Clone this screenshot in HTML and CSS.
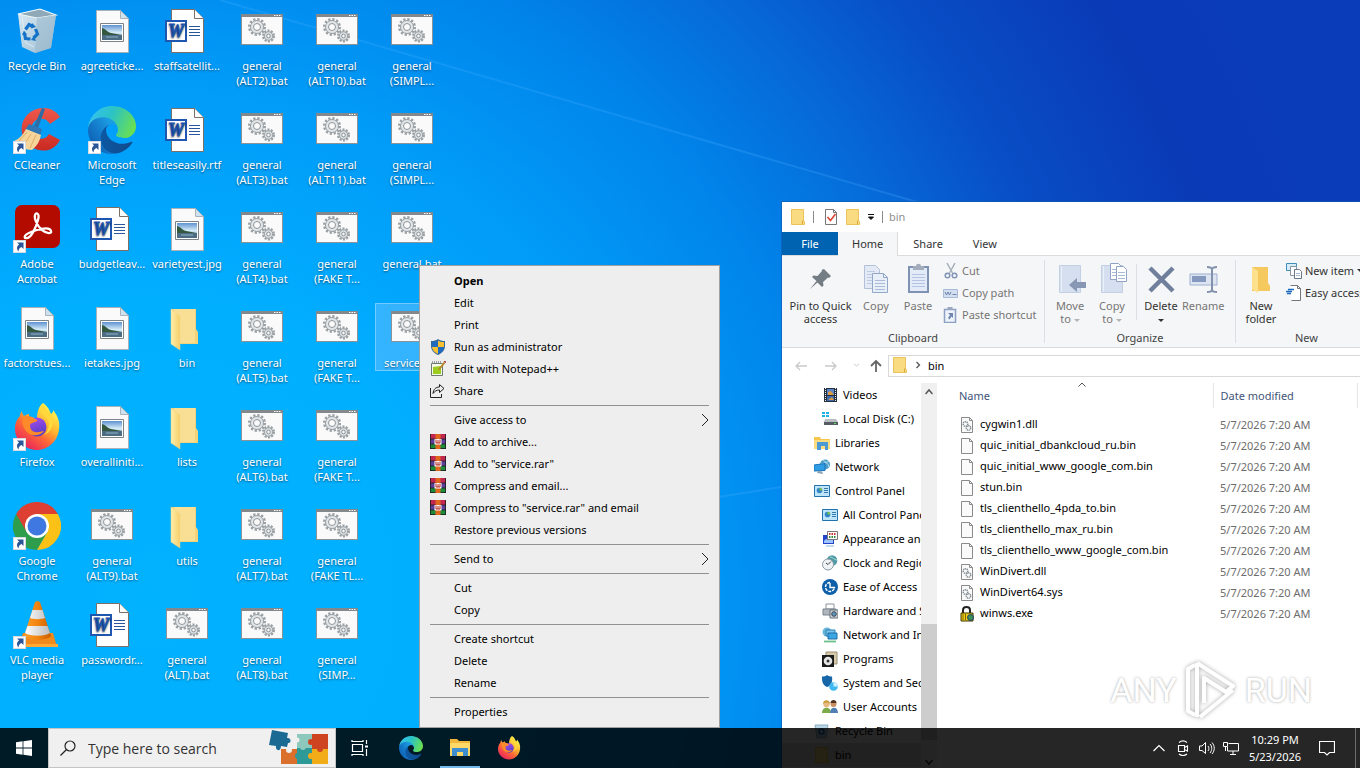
FILE: index.html
```html
<!DOCTYPE html>
<html lang="en">
<head>
    <meta charset="UTF-8">
    <meta name="viewport" content="width=device-width, initial-scale=1.0">
    <title>Desktop</title>
    <link rel="stylesheet" href="styles.css">
</head>
<body>

<!-- Icon sprite -->
<svg class="sprite" aria-hidden="true">
    <defs>
        <linearGradient id="gFolder" x1="0" y1="0" x2="1" y2="0"><stop offset="0" stop-color="#ffedaa"/><stop offset="1" stop-color="#f7cf6a"/></linearGradient>
        <linearGradient id="gEdgeA" x1="0" y1="0" x2="1" y2="0"><stop offset="0" stop-color="#0c59a4"/><stop offset="1" stop-color="#114a8b"/></linearGradient>
        <linearGradient id="gEdgeB" x1="0.8" y1="0.3" x2="0.1" y2="0.9"><stop offset="0" stop-color="#1b9de2"/><stop offset="0.5" stop-color="#1478c8"/><stop offset="1" stop-color="#0d5cb0"/></linearGradient>
        <linearGradient id="gEdgeC" x1="0" y1="0.3" x2="1" y2="0.6"><stop offset="0" stop-color="#35c1f1"/><stop offset="0.45" stop-color="#2bc3c4"/><stop offset="1" stop-color="#6be04e"/></linearGradient>
        <linearGradient id="gFox" x1="0.8" y1="0.1" x2="0.2" y2="0.95"><stop offset="0" stop-color="#fff44f"/><stop offset="0.35" stop-color="#ffb52e"/><stop offset="0.6" stop-color="#ff6a36"/><stop offset="1" stop-color="#e8205e"/></linearGradient>
        <linearGradient id="gPurple" x1="0" y1="0" x2="0.3" y2="1"><stop offset="0" stop-color="#b04bf0"/><stop offset="1" stop-color="#5540c8"/></linearGradient>
        <linearGradient id="gCone" x1="0" y1="0" x2="1" y2="0"><stop offset="0" stop-color="#ffa02c"/><stop offset="0.5" stop-color="#f28410"/><stop offset="1" stop-color="#c85e00"/></linearGradient>
        <linearGradient id="gWhite" x1="0" y1="0" x2="1" y2="0"><stop offset="0" stop-color="#fff"/><stop offset="1" stop-color="#bbb"/></linearGradient>
        <linearGradient id="gPic" x1="0" y1="0" x2="0" y2="1"><stop offset="0" stop-color="#5e92d0"/><stop offset="0.5" stop-color="#d5ebf7"/><stop offset="1" stop-color="#7fa3bd"/></linearGradient>
        <linearGradient id="gBin" x1="0" y1="0" x2="1" y2="1"><stop offset="0" stop-color="#d9e9f3"/><stop offset="0.6" stop-color="#b4cfe0"/><stop offset="1" stop-color="#8fb0c6"/></linearGradient>
        <linearGradient id="gCC" x1="0" y1="0" x2="0" y2="1"><stop offset="0" stop-color="#f0584b"/><stop offset="1" stop-color="#c92a22"/></linearGradient>
    </defs>

    <symbol id="link" viewBox="0 0 48 48">
        <rect x="0.5" y="35.5" width="12" height="12" fill="#fff" stroke="#d5dbe0"/>
        <path d="M4 37.500h6.500v6.500l-2-2c-2 1-3 2.200-3 4.500-2.400-3-1.600-5.600.6-7z" fill="#2a5699"/>
    </symbol>

    <symbol id="bat" viewBox="0 0 48 48">
        <rect x="3.500" y="7.500" width="41" height="30" fill="#fafafa" stroke="#8c9296"/>
        <path d="M3 7h42v3H3z" fill="#83888c"/>
        <path d="M36 8.500h7" stroke="#fff" stroke-dasharray="1.500 1"/>
        <circle cx="19" cy="20" r="7.500" fill="none" stroke="#9aa0a4" stroke-width="3" stroke-dasharray="2.200 1.730"/>
        <circle cx="19" cy="20" r="6.500" fill="#e2e6e9" stroke="#9aa0a4"/>
        <circle cx="19" cy="20" r="3.500" fill="#fafafa" stroke="#8f9599"/>
        <circle cx="30.500" cy="29" r="5" fill="none" stroke="#9aa0a4" stroke-width="3" stroke-dasharray="1.900 1.240"/>
        <circle cx="30.500" cy="29" r="4.300" fill="#d8dde0" stroke="#9aa0a4"/>
        <circle cx="30.500" cy="29" r="1.800" fill="#fafafa" stroke="#8f9599"/>
    </symbol>

    <symbol id="jpg" viewBox="0 0 48 48">
        <path d="M8.500 3.500h24l8 8v34h-32z" fill="#fafafa" stroke="#a9b2b8"/>
        <path d="M32.500 3.500v8h8z" fill="#cfe3ee" stroke="#a9b2b8"/>
        <path d="M12.500 16.500h23v18h-23z" fill="#fff" stroke="#7b8388"/>
        <path d="M14 18h20v15H14z" fill="url(#gPic)"/>
        <path d="M14 21c4 1 5 4 9 5s7 1 11 2v1H14z" fill="#33573f"/>
        <path d="M14 28h20v5H14z" fill="#4b6c82"/>
        <path d="M18 30h12" stroke="#8fb3cc"/>
    </symbol>

    <symbol id="word" viewBox="0 0 48 48">
        <path d="M8.500 2.500h23l9 9v34h-32z" fill="#fff" stroke="#7d6e66"/>
        <path d="M31.500 2.500v9h9" fill="#fff" stroke="#7d6e66"/>
        <path d="M26 19.500h11M26 22.500h11M26 25.500h11M26 28.500h11" stroke="#2b579a"/>
        <rect x="3" y="14" width="20" height="20" fill="#fff" stroke="#1f56b0" stroke-width="2"/>
        <text x="13" y="30" class="word-letter">W</text>
    </symbol>

    <symbol id="folder" viewBox="0 0 48 48">
        <path d="M9 5h24v20l2 3v12H14z" fill="#f4d27a"/>
        <path d="M11 5h21v34H15z" fill="#f9df93"/>
        <path d="M8 5l9 7v34l-9-6z" fill="url(#gFolder)" stroke="#f0d488" stroke-width="0.500"/>
    </symbol>

    <symbol id="recycle" viewBox="0 0 48 48">
        <path d="M5 7l22-5 16 6-5 33-16 5-13-6z" fill="url(#gBin)"/>
        <path d="M5 7l22-5 16 6-19 3z" fill="#8fa9b8" stroke="#f1f7fa" stroke-width="1.200"/>
        <path d="M24 11l19-3-5 33-16 5z" fill="#9fbdd0" opacity="0.700"/>
        <path d="M9 10l4 26 8 4" fill="none" stroke="#e8f3f9" opacity="0.700"/>
        <g fill="none" stroke="#1473c8" stroke-width="3.200"><path d="M12.500 22.500l3.500-5 4 2"/><path d="M22.500 22l2 5-4 4"/><path d="M17.500 32l-5-.5-1-5"/></g>
        <path d="M19 16l4 4-5 1.500zM23 34l-5-1 3-4zM9 28l2-4.500 3 4z" fill="#1473c8"/>
    </symbol>

    <symbol id="ccleaner" viewBox="0 0 48 48">
        <path d="M47 11C42 2 29-1 19 5 9 11 6 23 11 33s18 14 27 10c4-2 7-5 9-9l-11-6c-2 4-7 6-11 4-5-2-7-7-6-12s6-8 11-7c3 0 5 2 7 5z" fill="url(#gCC)"/>
        <path d="M32 3l-7 19-4-2L29 2z" fill="#2e6da4"/>
        <path d="M16 18l13 5-2 7-15-6z" fill="#2f78b7"/>
        <path d="M13 23l15 6c-1 6-4 11-9 15-6 0-13-3-18-9 5-2 9-6 12-12z" fill="#f6d59b"/>
        <path d="M14 26L5 36M18 28l-8 12M23 29l-6 13" stroke="#dcae66"/>
    </symbol>

    <symbol id="edge" viewBox="0 0 256 256">
        <path d="M231 190.500c-3.400 1.800-6.900 3.400-10.500 4.700-11.500 4.300-23.600 6.500-35.900 6.500-47.300 0-88.500-32.500-88.500-74.300 0-11.400 6.400-21.900 16.400-27.300-42.800 1.800-53.800 46.400-53.800 72.500 0 74 68.100 81.400 82.800 81.400 7.900 0 19.800-2.300 27-4.600l1.300-.4c27.600-9.500 51-28.100 66.600-52.800 1.200-1.900.6-4.300-1.200-5.500-1.300-.8-2.900-.9-4.200-.2z" fill="url(#gEdgeA)"/>
        <path d="M105.700 241.400c-8.900-5.500-16.600-12.800-22.700-21.300-26.300-36-18.400-86.500 17.600-112.800 3.800-2.700 7.700-5.200 11.900-7.200 3.100-1.500 8.400-4.100 15.500-4 10.100.1 19.600 4.900 25.700 13 4 5.400 6.300 11.900 6.400 18.700 0-.2 24.500-79.600-80-79.600-43.900 0-80 41.600-80 78.200-.2 19.300 4 38.500 12.100 56 27.600 58.800 94.800 87.600 156.400 67.100-21.100 6.600-44.100 3.700-62.900-8.100z" fill="url(#gEdgeB)"/>
        <path d="M152.300 148.900c-.8 1-3.300 2.500-3.300 5.700 0 2.600 1.700 5.100 4.700 7.200 14.400 10 41.500 8.700 41.600 8.700 10.700 0 21.100-2.900 30.300-8.300 18.800-11 30.400-31.100 30.400-52.900.3-22.400-8-37.300-11.300-43.900C223.500 23.900 177.700 0 128 0 58 0 1 56.200 0 126.200c.5-36.500 36.800-66 80-66 3.500 0 23.500.3 42 10.100 16.300 8.600 24.900 18.900 30.800 29.200 6.200 10.700 7.300 24.100 7.300 29.500s-2.700 13.300-7.800 19.900z" fill="url(#gEdgeC)"/>
    </symbol>

    <symbol id="acrobat" viewBox="0 0 48 48">
        <rect x="2" y="0" width="45" height="43" rx="7" fill="#b30b00"/>
        <path d="M12 33c-2-3 5-6 12-8s13-2 14 1-4 3-9-1-8-12-7-15 5-2 3 5-7 20-13 18z" fill="none" stroke="#fff" stroke-width="2.300"/>
    </symbol>

    <symbol id="firefox" viewBox="0 0 48 48">
        <path d="M30 0c6 4 7 9 8 11 2-1 2-3 2-4 5 6 7 12 6 19-1 12-11 21-22 21S2 38 2 26c0-6 2-10 5-13 0-2 1-4 2-5 0 2 1 4 2 5 2-1 3-2 5-2 0 0 0-1 0 3 2 0 6 1 8 2 0-8 2-13 6-16z" fill="url(#gFox)"/>
        <circle cx="24" cy="24" r="9.500" fill="url(#gPurple)"/>
        <path d="M10 14c4-2 9-1 12 2 2 1 3 1 2 2-2 2-6 1-7 4 0 3 1 6 5 7 3 1 6-1 9-1-3 4-8 5-12 4-8-3-11-11-9-18z" fill="#ff8a2a"/>
        <path d="M30 1c-3 6-1 9 3 13 5 5 3 14-2 18 8-3 11-12 7-20-2-4-6-6-8-11z" fill="#ffd93b"/>
    </symbol>

    <symbol id="chrome" viewBox="0 0 48 48">
        <path d="M3.200 12A24 24 0 0 0 24 48l10.400-18z" fill="#2f9e4c"/>
        <path d="M44.800 12A24 24 0 0 1 24 48l10.400-18L24 12z" fill="#fbc116"/>
        <path d="M44.800 12A24 24 0 0 0 3.200 12l10.400 18L24 12z" fill="#dd4032"/>
        <circle cx="24" cy="24" r="12" fill="#fff"/>
        <circle cx="24" cy="24" r="9.500" fill="#3f78e0"/>
    </symbol>

    <symbol id="vlc" viewBox="0 0 48 48">
        <path d="M10 32h30l4 14H5z" fill="#f08a1c"/>
        <path d="M4 43h41v3H4z" fill="#ffa834"/>
        <path d="M22 1c1-1 4-1 5 0l11 34c-4 5-23 5-27 0z" fill="url(#gCone)"/>
        <path d="M19.500 9h10l2.500 8c-3 1.500-12 1.500-15 0zM14.500 25h20l2.500 7c-5 3.500-20 3.500-25 0z" fill="url(#gWhite)"/>
    </symbol>

    <!-- menu -->
    <symbol id="shield" viewBox="0 0 16 16">
        <path d="M8 0c2 1.500 4 2 7 2v5c0 4-2.500 7-7 9-4.500-2-7-5-7-9V2c3 0 5-.5 7-2z" fill="#33689c"/>
        <path d="M8 1.500V8H2V3c2.500 0 4.500-.5 6-1.500zM14 8c-.2 3-2.200 5.200-6 7V8z" fill="#1d6cc0"/>
        <path d="M8 1.500C9.500 2.500 11.500 3 14 3v5H8zM2 8h6v7c-3.800-1.800-5.800-4-6-7z" fill="#fbc02f"/>
    </symbol>
    <symbol id="npp" viewBox="0 0 16 16">
        <path d="M1.500 2.500h11v12h-11z" fill="#f6fbe9" stroke="#6d7a70"/>
        <path d="M3 6l8-1v8H3z" fill="#9ccc1f"/>
        <path d="M2 1h10" stroke="#555" stroke-dasharray="1 1"/>
        <path d="M14.500 1.500L9 8.500" stroke="#b8862b" stroke-width="2"/>
        <path d="M14 0l2 1.500" stroke="#a33" stroke-width="1.500"/>
    </symbol>
    <symbol id="share" viewBox="0 0 16 16">
        <path d="M.5 5v9.500h11V11" fill="none" stroke="#222"/>
        <path d="M9.500 1.500l4.500 4-4.500 4V7c-3 0-4.500 1-6.500 3.500.5-4 2.500-6.500 6.500-6.500z" fill="none" stroke="#222"/>
    </symbol>
    <symbol id="rar" viewBox="0 0 16 16">
        <path d="M0 0h16v6H0z" fill="#c2284f"/><path d="M0 5h16v5H0z" fill="#5b3f9b"/><path d="M0 10h16v5H0z" fill="#1e8b3a"/>
        <path d="M0 5h16M0 10h16M.5 0v15M15.500 0v15M0 14.500h16" stroke="#1c1c1c" stroke-width="0.800"/>
        <path d="M5.500 0h5v15h-5z" fill="#e0671e"/>
        <path d="M4.500 5h7v5.500h-7z" fill="#fff"/><path d="M6 5.500v3.500h4V5.500M8 6v3" fill="none" stroke="#b3261e"/>
    </symbol>
    <symbol id="more" viewBox="0 0 8 14"><path d="M1 1l6 6-6 6" fill="none" stroke="#222"/></symbol>

    <!-- explorer -->
    <symbol id="sfolder" viewBox="0 0 16 16">
        <path d="M1.500.5h12v11l1 1v3h-13z" fill="#f9dc82" stroke="#eac35a"/>
        <path d="M12.500 15v-3l1-1" fill="none" stroke="#d9a93c"/>
    </symbol>
    <symbol id="check" viewBox="0 0 16 16">
        <path d="M2.500.5h8l3 3v12h-11z" fill="#fff" stroke="#777"/><path d="M10.500.5v3h3" fill="none" stroke="#777"/>
        <path d="M4.500 8l3 3.500L12.500 5" fill="none" stroke="#d9432f" stroke-width="1.600"/>
    </symbol>
    <symbol id="drop" viewBox="0 0 8 8"><path d="M1 1.500h6M1.500 4h5L4 6.500z" fill="#111" stroke="#111"/></symbol>
    <symbol id="pin" viewBox="0 0 32 32">
        <path d="M19 6l7 7-2 2-1-.5-5 4.500.5 3.500-1.500 1.500-4.500-4.500L5 26l6.500-8-4.500-4 1.500-1.500 4 .5 4.500-5-.5-1z" fill="#747c84"/>
    </symbol>
    <symbol id="copy" viewBox="0 0 32 32">
        <path d="M4.500 2.500h11l4 4v19h-15z" fill="#e3eaf6" stroke="#b3c1d8"/>
        <path d="M7 8.500h8M7 11.500h8M7 14.500h8M7 17.500h8M7 20.500h8" stroke="#bccbe2"/>
        <path d="M12.500 10.500h11l4 4v15h-15z" fill="#e9eff9" stroke="#93a7c9"/><path d="M23.500 10.500v4h4" fill="none" stroke="#93a7c9"/>
        <path d="M15 17.500h10M15 20.500h10M15 23.500h10M15 26.500h10" stroke="#a9bbd8"/>
    </symbol>
    <symbol id="paste" viewBox="0 0 32 32">
        <path d="M7 4h19v25H7z" fill="#e3eaf8" stroke="#8092b4" stroke-width="2"/>
        <path d="M10 11.500h13M10 14.500h13M10 17.500h13M10 20.500h13M10 23.500h13" stroke="#b4c4e2"/>
        <path d="M11 3h3c0-3 5-3 5 0h3v4H11z" fill="#a3adbb"/>
    </symbol>
    <symbol id="cut" viewBox="0 0 16 16">
        <path d="M4 0l5.500 10M12 0L6.500 10" stroke="#a7b0bb" stroke-width="1.500"/>
        <circle cx="4.500" cy="12.500" r="2.300" fill="none" stroke="#8094b5" stroke-width="1.500"/><circle cx="11.500" cy="12.500" r="2.300" fill="none" stroke="#8094b5" stroke-width="1.500"/>
    </symbol>
    <symbol id="path" viewBox="0 0 16 16">
        <path d="M.5 4.500h14v8H.5z" fill="#d3def0" stroke="#a9bad6"/><path d="M2 7l1.500 3L5 7l1.500 3L8 7M9.500 9.500h4" fill="none" stroke="#6e84ab"/>
    </symbol>
    <symbol id="pshort" viewBox="0 0 16 16">
        <path d="M1.500 2.500h11v13h-11z" fill="#eef3fb" stroke="#8ba0c2" stroke-width="1.500"/><path d="M4.500 0h5v3h-5z" fill="#9aa9c0"/>
        <path d="M5 6h5v5L8.500 9.500l-2 3L5 11l2-3z" fill="#6e86b0"/>
    </symbol>
    <symbol id="move" viewBox="0 0 32 32">
        <path d="M5.500 2.500h21v27h-21z" fill="#d5dfef" stroke="#c3cfe2"/><path d="M7.500 3v26" stroke="#eaf0f8"/>
        <path d="M15 22l8-7v4h9v6h-9v4z" fill="#8797b4"/>
    </symbol>
    <symbol id="copyto" viewBox="0 0 32 32">
        <path d="M5.500 2.500h21v27h-21z" fill="#d5dfef" stroke="#c3cfe2"/><path d="M7.500 3v26" stroke="#eaf0f8"/>
        <path d="M14.500.5h8l3 3v13h-11z" fill="#fff" stroke="#8fa3c4"/>
        <path d="M20.500 3.500h7l3 3v12h-10z" fill="#fff" stroke="#8fa3c4"/>
        <path d="M16 6.500h4M16 9.500h4M16 12.500h4M22 9.500h7M22 12.500h7M22 15.500h7" stroke="#a9bad6"/>
    </symbol>
    <symbol id="delete" viewBox="0 0 32 32"><path d="M5 5l23 23M28 5L5 28" stroke="#6f7f9c" stroke-width="4.500"/></symbol>
    <symbol id="rename" viewBox="0 0 32 32">
        <path d="M3 11h27v11H3z" fill="#dde5f3" stroke="#9fb0ce"/><path d="M5 13h14v6H5z" fill="#8599bf"/>
        <path d="M20 4c3 0 5 .5 5 2.500v20c0 2-2 2.500-5 2.500M30 4c-3 0-5 .5-5 2.500M30 29c-3 0-5-.5-5-2.500" fill="none" stroke="#8291ac" stroke-width="2"/>
    </symbol>
    <symbol id="newfolder" viewBox="0 0 32 32">
        <path d="M7 4h16v16l2 3v5H7z" fill="#f5c95e"/><path d="M7 4l6 4v22l-6-4z" fill="#ffe08c"/>
    </symbol>
    <symbol id="newitem" viewBox="0 0 16 16">
        <path d="M.5.500h10v7H.5z" fill="#d7ecf7" stroke="#3e8fb8"/><path d="M4.500 3.500h6v9h-6z" fill="#fff" stroke="#8a97a5"/><path d="M8.500 6.500h5l2 2v7h-7z" fill="#fff" stroke="#68788a"/><path d="M10 10.500h4M10 12.500h4" stroke="#a9bad6"/>
    </symbol>
    <symbol id="easy" viewBox="0 0 16 16">
        <path d="M4.500.5h7l3 3v12h-9" fill="#fff" stroke="#777"/><path d="M11.500.5v3h3" fill="none" stroke="#777"/>
        <path d="M2 4.500h6M0 6.500h6M1 8.500h4" stroke="#1b6bc0" stroke-width="1.300"/>
    </symbol>
    <symbol id="left" viewBox="0 0 14 14"><path d="M13 7H2M6 3L2 7l4 4" fill="none" stroke="#c9c9c9" stroke-width="1.300"/></symbol>
    <symbol id="right" viewBox="0 0 14 14"><path d="M1 7h11M8 3l4 4-4 4" fill="none" stroke="#c9c9c9" stroke-width="1.300"/></symbol>
    <symbol id="up" viewBox="0 0 14 14"><path d="M7 13V2M2 7l5-5 5 5" fill="none" stroke="#666" stroke-width="1.800"/></symbol>
    <symbol id="caret" viewBox="0 0 8 8"><path d="M2 2l2.500 2L7 2" fill="none" stroke="#ccc"/></symbol>
    <symbol id="crumb" viewBox="0 0 8 8"><path d="M2.500 1L5.500 4l-3 3" fill="none" stroke="#555" stroke-width="1.300"/></symbol>
    <symbol id="chevup" viewBox="0 0 8 8"><path d="M.5 6L4 2l3.500 4" fill="none" stroke="#555" stroke-width="1.500"/></symbol>
    <symbol id="sort" viewBox="0 0 8 8"><path d="M.5 5.500L4 2l3.500 3.500" fill="none" stroke="#555"/></symbol>
    <symbol id="chevdown" viewBox="0 0 8 8"><path d="M.5 2L4 6l3.500-4" fill="none" stroke="#333" stroke-width="1.500"/></symbol>

    <symbol id="video" viewBox="0 0 16 16"><path d="M2 1h13v14H2z" fill="#26303c"/><path d="M3.500 1v14M13.500 1v14" stroke="#e8eef4" stroke-dasharray="1 1"/><path d="M5 2h7v6H5z" fill="#5b86c8"/><path d="M5 9h7v5H5z" fill="#3f6bae"/><path d="M6 5l3-1 3 4H6zM6 13l4-3 2 3z" fill="#d79a45"/></symbol>
    <symbol id="disk" viewBox="0 0 16 16"><path d="M0 1h3v2H0zM4 1h3v2H4zM0 4h3v2H0zM4 4h3v2H4z" fill="#1fb0e8"/><path d="M3 8h11l2 3H2z" fill="#b8bdc2"/><path d="M2 11h14v3H2z" fill="#565c63"/><path d="M12 12.500h2" stroke="#5fe06a"/></symbol>
    <symbol id="libs" viewBox="0 0 16 16"><path d="M0 2h6l1 2h9v10H0z" fill="#f5c64c"/><path d="M0 5h16v9H0z" fill="#fbdc80"/><path d="M3 7h11v8h-3v-4H7v4H3z" fill="#4b9ad6"/></symbol>
    <symbol id="network" viewBox="0 0 16 16"><circle cx="11" cy="5.500" r="5" fill="#4c9cc8"/><path d="M9 1c2 2 5 3 6 7M7 5c3-1 5-1 8-3" stroke="#b5e0f0" fill="none"/><path d="M0 6l11-1.500v7L0 12z" fill="#2f9ce6" stroke="#1872b8"/><path d="M4 12l4 .5 1 2.500-6-1z" fill="#8ba3b5"/></symbol>
    <symbol id="cpanel" viewBox="0 0 16 16"><path d="M.5 2.500h15v11H.5z" fill="#bfe5fa" stroke="#2173b0"/><circle cx="5.500" cy="7.500" r="2.800" fill="#2f86c9"/><path d="M5.500 7.500V4.700a2.800 2.800 0 0 1 2.800 2.800z" fill="#7cc142"/><path d="M10 5.500h4M10 7.500h4M10 9.500h4" stroke="#3579ad"/></symbol>
    <symbol id="appearance" viewBox="0 0 16 16"><path d="M1 4h11v9H1z" fill="#2443c9"/><path d="M2 10c3-4 5 1 9-3v5H2z" fill="#9ec4ff"/><path d="M5.500.5h10v8h-10z" fill="#fff" stroke="#777"/><path d="M7 3h7" stroke="#c33" stroke-width="2" stroke-dasharray="1.500 1"/><path d="M7 6h7" stroke="#338a3e" stroke-width="2" stroke-dasharray="1.500 1"/><path d="M4 15h8" stroke="#8cb5d8"/></symbol>
    <symbol id="clock" viewBox="0 0 16 16"><circle cx="10" cy="5.500" r="5.300" fill="#4f9aa8"/><path d="M8 2c3 0 4 3 7 3" stroke="#a7dccb" fill="none"/><circle cx="6" cy="9.500" r="5.500" fill="#eef2f5" stroke="#8b99a6"/><path d="M6 9.500l3-3M6 9.500L4 8" stroke="#444"/></symbol>
    <symbol id="ease" viewBox="0 0 16 16"><circle cx="8" cy="8" r="8" fill="#0c5fa8"/><path d="M8 3.500a4.500 4.500 0 1 0 4.500 4.500" fill="none" stroke="#fff" stroke-width="1.500" stroke-dasharray="3 1"/><path d="M8 4v4.500h5" fill="none" stroke="#fff" stroke-width="1.400"/></symbol>
    <symbol id="printer" viewBox="0 0 16 16"><path d="M4 1h8v5H4z" fill="#fff" stroke="#8b939b"/><path d="M1 6h13v6H1z" fill="#aeb6bf" stroke="#7b858e"/><path d="M8 7h8v8H8z" fill="#ccd3d9" stroke="#69737c"/><circle cx="12" cy="11" r="2.300" fill="#5c98c8" stroke="#444"/></symbol>
    <symbol id="netint" viewBox="0 0 16 16"><circle cx="5" cy="5" r="4.500" fill="#6ab7dc"/><path d="M4 3h9v6H4z" fill="#7dc4ec" stroke="#2e80b5"/><path d="M6 6h9v6H6z" fill="#39a5e3" stroke="#1c6fa8"/><path d="M2 14.500h12" stroke="#6cc08b" stroke-width="1.800"/></symbol>
    <symbol id="programs" viewBox="0 0 16 16"><path d="M4 1h11v12H4z" fill="#d7c8a8" stroke="#9b8f75"/><path d="M0 4h12v12H0z" fill="#1a1a1a"/><circle cx="6" cy="10" r="4.300" fill="#e6e6e6"/><circle cx="6" cy="10" r="1.500" fill="#333"/></symbol>
    <symbol id="security" viewBox="0 0 16 16"><path d="M5 0c1.500 1 3.500 1.500 5 1.500C11 8 8 11 5 12 2 11-.5 8 0 1.500 2 1.500 4 1 5 0z" fill="#1767a8"/><circle cx="11.500" cy="11.500" r="4.300" fill="#3fb8ef"/><path d="M11.500 11.500V7.200a4.300 4.300 0 0 1 4.300 4.300z" fill="#cfeefd"/></symbol>
    <symbol id="users" viewBox="0 0 16 16"><circle cx="4.500" cy="5" r="3.200" fill="#e7b884"/><path d="M1 5c0-5 7-5 7 0-2-2-5-2-7 0z" fill="#c79b35"/><path d="M0 14c0-7 9-7 9 0z" fill="#7caa4a"/><circle cx="11.500" cy="5" r="3" fill="#c98e62"/><path d="M8.500 4c0-4 6-4 6 0z" fill="#503322"/><path d="M8 14c0-7 8-7 8 0z" fill="#517fb3"/></symbol>
    <symbol id="sbin" viewBox="0 0 16 16"><path d="M1 2h13l-2 13H3z" fill="#b9d4e4" stroke="#8db0c6"/><circle cx="7.500" cy="8.500" r="2.500" fill="none" stroke="#1473c8" stroke-width="1.500"/></symbol>

    <symbol id="blank" viewBox="0 0 16 16"><path d="M2.500.5h8l3 3v12h-11z" fill="#fafafa" stroke="#8b8b8b"/><path d="M10.500.5v3h3" fill="none" stroke="#8b8b8b"/></symbol>
    <symbol id="dll" viewBox="0 0 16 16"><path d="M2.500.5h8l3 3v12h-11z" fill="#fafafa" stroke="#8b8b8b"/><path d="M10.500.5v3h3" fill="none" stroke="#8b8b8b"/><circle cx="6.500" cy="7" r="2.300" fill="none" stroke="#7f8a92" stroke-width="1.500" stroke-dasharray="1.200 .6"/><circle cx="9.500" cy="11" r="2.200" fill="none" stroke="#7f8a92" stroke-width="1.500" stroke-dasharray="1.200 .6"/></symbol>
    <symbol id="lock" viewBox="0 0 16 16"><path d="M4 8V4c0-4 7-4 7 0v4" fill="none" stroke="#222" stroke-width="2"/><path d="M2 7h12v8H2z" fill="#f2cf1d" stroke="#3b3500"/><path d="M4 8v6M6.500 8v6" stroke="#7a6500"/><circle cx="11.500" cy="11.500" r="3" fill="#3c8f5a" stroke="#1c3b66"/></symbol>

    <!-- taskbar -->
    <symbol id="win" viewBox="0 0 16 16"><path d="M0 2.200l6.600-.9v6.300H0zM7.400 1.200L16 0v7.600H7.400zM0 8.400h6.600v6.300L0 13.800zM7.400 8.400H16V16l-8.600-1.200z" fill="#fff"/></symbol>
    <symbol id="search" viewBox="0 0 16 16"><circle cx="10" cy="6" r="5" fill="none" stroke="#222" stroke-width="1.200"/><path d="M6.500 9.500L.5 15.500" stroke="#222" stroke-width="1.300"/></symbol>
    <symbol id="puzzle" viewBox="0 0 64 36">
        <path d="M30 4h15v14H30z" fill="#8cc8bb"/><path d="M45 4h16v15H45z" fill="#cf4420"/><path d="M14 19h16v15H14z" fill="#db6f2c"/><path d="M30 18h15v16H30z" fill="#2e9a97"/><path d="M45 19h16v15H45z" fill="#f2ac18"/>
        <circle cx="44" cy="12" r="3" fill="#cf4420"/><circle cx="53" cy="19" r="3" fill="#cf4420"/><circle cx="36" cy="17" r="3" fill="#8cc8bb"/><circle cx="31" cy="26" r="3" fill="#2e9a97"/><circle cx="44" cy="26" r="3" fill="#f2ac18"/><circle cx="22" cy="20" r="3" fill="#f0f0f0"/><circle cx="30" cy="10" r="2.500" fill="#f0f0f0"/>
        <path d="M5 0l16 3-1 5c4-1 5 5 1 5l-1 4-6-1c0 6-6 5-5 0l-7-1z" fill="#1b6a94"/>
    </symbol>
    <symbol id="taskview" viewBox="0 0 18 18"><path d="M1 3V1M12 3V1M1 15v2M12 15v2M1 2.500h11M1 15.500h11M1.500 5.500h10v7h-10zM15.500 1v4M15.500 10v7" fill="none" stroke="#fff" stroke-width="1.200"/><path d="M14 6.500h3v2h-3z" fill="#fff"/></symbol>
    <symbol id="explorer" viewBox="0 0 24 24"><path d="M2 3h7l2 2h11v15H2z" fill="#f0b73a"/><path d="M2 7h20v13H2z" fill="#ffd968"/><path d="M4 12h16v8h-5v-4H9v4H4z" fill="#3f8fd0"/></symbol>
    <symbol id="tchev" viewBox="0 0 16 16"><path d="M2.500 11L8 5.500l5.500 5.500" fill="none" stroke="#fff" stroke-width="1.200"/></symbol>
    <symbol id="meet" viewBox="0 0 16 16"><path d="M3.500 5.500h6v6h-6zM9.500 7.500l3-1.500v5l-3-1.500M4 2.500c2.500-2 5.500-2 8 0M4 14c2.500 2 5.500 2 8 0" fill="none" stroke="#fff" stroke-width="1.100"/></symbol>
    <symbol id="volume" viewBox="0 0 16 16"><path d="M.5 6v4.500H3L6.500 13.500v-11L3 6zM9 6c1.200 1.500 1.200 3.500 0 5M11 4c2.300 2.500 2.300 6 0 9M13 2.500c3 3.500 3 8 0 11.500" fill="none" stroke="#fff"/></symbol>
    <symbol id="lan" viewBox="0 0 16 16"><path d="M5.500 3.500h10v7.500h-11V7M10 11v3M7 14.500h6M.5 2.500h4v4h-4zM2.500 6.500V11" fill="none" stroke="#fff"/></symbol>
    <symbol id="note" viewBox="0 0 16 16"><path d="M.5 1.500h15v11h-5L8 15l-2.500-2.500h-5z" fill="none" stroke="#fff" stroke-width="1.200"/></symbol>
</svg>

<div class="desktop">
    <svg class="rays" viewBox="0 0 1360 768" preserveAspectRatio="none" aria-hidden="true">
        <path d="M220 0L1000 226" stroke="#55b4ff" stroke-width="2" opacity="0.220"/>
        <path d="M0 8L240 0L1000 226L1360 380V768H0z" fill="#0aa0ff" opacity="0.050"/>
        <path d="M700 500L800 484" stroke="#4fb0ff" stroke-width="2" opacity="0.250"/>
    </svg>

    <!-- Desktop icons, filled column by column -->
    <ul class="icons">
        <li class="icon"><svg><use href="#recycle"/></svg><span>Recycle Bin</span></li>
        <li class="icon"><svg><use href="#ccleaner"/><use href="#link"/></svg><span>CCleaner</span></li>
        <li class="icon"><svg><use href="#acrobat"/><use href="#link"/></svg><span>Adobe Acrobat</span></li>
        <li class="icon"><svg><use href="#jpg"/></svg><span>factorstues...</span></li>
        <li class="icon"><svg><use href="#firefox"/><use href="#link"/></svg><span>Firefox</span></li>
        <li class="icon"><svg><use href="#chrome"/><use href="#link"/></svg><span>Google Chrome</span></li>
        <li class="icon"><svg><use href="#vlc"/><use href="#link"/></svg><span>VLC media player</span></li>

        <li class="icon"><svg><use href="#jpg"/></svg><span>agreeticke...</span></li>
        <li class="icon"><svg><use href="#edge"/><use href="#link"/></svg><span>Microsoft Edge</span></li>
        <li class="icon"><svg><use href="#word"/></svg><span>budgetleav...</span></li>
        <li class="icon"><svg><use href="#jpg"/></svg><span>ietakes.jpg</span></li>
        <li class="icon"><svg><use href="#jpg"/></svg><span>overalliniti...</span></li>
        <li class="icon"><svg><use href="#bat"/></svg><span>general (ALT9).bat</span></li>
        <li class="icon"><svg><use href="#word"/></svg><span>passwordr...</span></li>

        <li class="icon"><svg><use href="#word"/></svg><span>staffsatellit...</span></li>
        <li class="icon"><svg><use href="#word"/></svg><span>titleseasily.rtf</span></li>
        <li class="icon"><svg><use href="#jpg"/></svg><span>varietyest.jpg</span></li>
        <li class="icon"><svg><use href="#folder"/></svg><span>bin</span></li>
        <li class="icon"><svg><use href="#folder"/></svg><span>lists</span></li>
        <li class="icon"><svg><use href="#folder"/></svg><span>utils</span></li>
        <li class="icon"><svg><use href="#bat"/></svg><span>general (ALT).bat</span></li>

        <li class="icon"><svg><use href="#bat"/></svg><span>general (ALT2).bat</span></li>
        <li class="icon"><svg><use href="#bat"/></svg><span>general (ALT3).bat</span></li>
        <li class="icon"><svg><use href="#bat"/></svg><span>general (ALT4).bat</span></li>
        <li class="icon"><svg><use href="#bat"/></svg><span>general (ALT5).bat</span></li>
        <li class="icon"><svg><use href="#bat"/></svg><span>general (ALT6).bat</span></li>
        <li class="icon"><svg><use href="#bat"/></svg><span>general (ALT7).bat</span></li>
        <li class="icon"><svg><use href="#bat"/></svg><span>general (ALT8).bat</span></li>

        <li class="icon"><svg><use href="#bat"/></svg><span>general (ALT10).bat</span></li>
        <li class="icon"><svg><use href="#bat"/></svg><span>general (ALT11).bat</span></li>
        <li class="icon"><svg><use href="#bat"/></svg><span>general<br>(FAKE T...</span></li>
        <li class="icon"><svg><use href="#bat"/></svg><span>general<br>(FAKE T...</span></li>
        <li class="icon"><svg><use href="#bat"/></svg><span>general<br>(FAKE T...</span></li>
        <li class="icon"><svg><use href="#bat"/></svg><span>general<br>(FAKE TL...</span></li>
        <li class="icon"><svg><use href="#bat"/></svg><span>general<br>(SIMP...</span></li>

        <li class="icon"><svg><use href="#bat"/></svg><span>general<br>(SIMPL...</span></li>
        <li class="icon"><svg><use href="#bat"/></svg><span>general<br>(SIMPL...</span></li>
        <li class="icon"><svg><use href="#bat"/></svg><span>general.bat</span></li>
        <li class="icon selected"><svg><use href="#bat"/></svg><span>service.bat</span></li>
    </ul>

    <!-- Explorer window -->
    <section class="window">
        <header class="titlebar">
            <svg class="i16"><use href="#sfolder"/></svg>
            <i class="bar"></i>
            <svg class="i16"><use href="#check"/></svg>
            <svg class="i16"><use href="#sfolder"/></svg>
            <svg class="i8"><use href="#drop"/></svg>
            <i class="bar"></i>
            <span>bin</span>
        </header>
        <nav class="tabs">
            <button class="file">File</button>
            <button class="active">Home</button>
            <button>Share</button>
            <button>View</button>
        </nav>
        <div class="ribbon">
            <div class="group clipboard">
                <div class="tools">
                    <button class="big wide"><svg><use href="#pin"/></svg>Pin to Quick<br>access</button>
                    <button class="big" disabled><svg><use href="#copy"/></svg>Copy</button>
                    <button class="big" disabled><svg><use href="#paste"/></svg>Paste</button>
                    <div class="stack">
                        <button disabled><svg class="i16"><use href="#cut"/></svg>Cut</button>
                        <button disabled><svg class="i16"><use href="#path"/></svg>Copy path</button>
                        <button disabled><svg class="i16"><use href="#pshort"/></svg>Paste shortcut</button>
                    </div>
                </div>
                <div class="caption">Clipboard</div>
            </div>
            <div class="group organize">
                <div class="tools">
                    <button class="big" disabled><svg><use href="#move"/></svg>Move<br>to <i class="tri"></i></button>
                    <button class="big" disabled><svg><use href="#copyto"/></svg>Copy<br>to <i class="tri"></i></button>
                    <i class="divider"></i>
                    <button class="big"><svg><use href="#delete"/></svg>Delete<br><i class="tri"></i></button>
                    <button class="big" disabled><svg><use href="#rename"/></svg>Rename</button>
                </div>
                <div class="caption">Organize</div>
            </div>
            <div class="group new">
                <div class="tools">
                    <button class="big"><svg><use href="#newfolder"/></svg>New<br>folder</button>
                    <div class="stack">
                        <button><svg class="i16"><use href="#newitem"/></svg>New item <i class="tri"></i></button>
                        <button><svg class="i16"><use href="#easy"/></svg>Easy access <i class="tri"></i></button>
                    </div>
                </div>
                <div class="caption">New</div>
            </div>
        </div>
        <div class="navbar">
            <button disabled aria-label="Back"><svg class="i14"><use href="#left"/></svg></button>
            <button disabled aria-label="Forward"><svg class="i14"><use href="#right"/></svg></button>
            <button class="slim" disabled aria-label="Recent"><svg class="i8"><use href="#caret"/></svg></button>
            <button class="slim" aria-label="Up"><svg class="i14"><use href="#up"/></svg></button>
            <div class="address">
                <svg class="i16"><use href="#sfolder"/></svg>
                <svg class="i8"><use href="#crumb"/></svg>
                <span>bin</span>
            </div>
        </div>
        <div class="panes">
            <ul class="tree">
                <li class="sub"><svg class="i16"><use href="#video"/></svg>Videos</li>
                <li class="sub"><svg class="i16"><use href="#disk"/></svg>Local Disk (C:)</li>
                <li><svg class="i16"><use href="#libs"/></svg>Libraries</li>
                <li><svg class="i16"><use href="#network"/></svg>Network</li>
                <li><svg class="i16"><use href="#cpanel"/></svg>Control Panel</li>
                <li class="sub"><svg class="i16"><use href="#cpanel"/></svg>All Control Panel Items</li>
                <li class="sub"><svg class="i16"><use href="#appearance"/></svg>Appearance and Personalization</li>
                <li class="sub"><svg class="i16"><use href="#clock"/></svg>Clock and Region</li>
                <li class="sub"><svg class="i16"><use href="#ease"/></svg>Ease of Access</li>
                <li class="sub"><svg class="i16"><use href="#printer"/></svg>Hardware and Sound</li>
                <li class="sub"><svg class="i16"><use href="#netint"/></svg>Network and Internet</li>
                <li class="sub"><svg class="i16"><use href="#programs"/></svg>Programs</li>
                <li class="sub"><svg class="i16"><use href="#security"/></svg>System and Security</li>
                <li class="sub"><svg class="i16"><use href="#users"/></svg>User Accounts</li>
                <li><svg class="i16"><use href="#sbin"/></svg>Recycle Bin</li>
                <li class="current"><svg class="i16"><use href="#sfolder"/></svg>bin</li>
            </ul>
            <div class="scrollbar">
                <svg class="i8"><use href="#chevup"/></svg>
                <div class="thumb"></div>
                <svg class="i8"><use href="#chevdown"/></svg>
            </div>
            <table class="files">
                <thead>
                    <tr><th class="name">Name<svg class="sort i8"><use href="#sort"/></svg></th><th class="date">Date modified</th><th></th></tr>
                </thead>
                <tbody>
                    <tr><td><svg class="i16"><use href="#dll"/></svg>cygwin1.dll</td><td>5/7/2026 7:20 AM</td></tr>
                    <tr><td><svg class="i16"><use href="#blank"/></svg>quic_initial_dbankcloud_ru.bin</td><td>5/7/2026 7:20 AM</td></tr>
                    <tr><td><svg class="i16"><use href="#blank"/></svg>quic_initial_www_google_com.bin</td><td>5/7/2026 7:20 AM</td></tr>
                    <tr><td><svg class="i16"><use href="#blank"/></svg>stun.bin</td><td>5/7/2026 7:20 AM</td></tr>
                    <tr><td><svg class="i16"><use href="#blank"/></svg>tls_clienthello_4pda_to.bin</td><td>5/7/2026 7:20 AM</td></tr>
                    <tr><td><svg class="i16"><use href="#blank"/></svg>tls_clienthello_max_ru.bin</td><td>5/7/2026 7:20 AM</td></tr>
                    <tr><td><svg class="i16"><use href="#blank"/></svg>tls_clienthello_www_google_com.bin</td><td>5/7/2026 7:20 AM</td></tr>
                    <tr><td><svg class="i16"><use href="#dll"/></svg>WinDivert.dll</td><td>5/7/2026 7:20 AM</td></tr>
                    <tr><td><svg class="i16"><use href="#dll"/></svg>WinDivert64.sys</td><td>5/7/2026 7:20 AM</td></tr>
                    <tr><td><svg class="i16"><use href="#lock"/></svg>winws.exe</td><td>5/7/2026 7:20 AM</td></tr>
                </tbody>
            </table>
        </div>
    </section>

    <!-- Context menu -->
    <menu class="context">
        <li><button class="default">Open</button></li>
        <li><button>Edit</button></li>
        <li><button>Print</button></li>
        <li><button><svg class="i16"><use href="#shield"/></svg>Run as administrator</button></li>
        <li><button><svg class="i16"><use href="#npp"/></svg>Edit with Notepad++</button></li>
        <li><button><svg class="i16"><use href="#share"/></svg>Share</button></li>
        <li class="sep"></li>
        <li><button>Give access to<svg class="more"><use href="#more"/></svg></button></li>
        <li><button><svg class="i16"><use href="#rar"/></svg>Add to archive...</button></li>
        <li><button><svg class="i16"><use href="#rar"/></svg>Add to "service.rar"</button></li>
        <li><button><svg class="i16"><use href="#rar"/></svg>Compress and email...</button></li>
        <li><button><svg class="i16"><use href="#rar"/></svg>Compress to "service.rar" and email</button></li>
        <li><button>Restore previous versions</button></li>
        <li class="sep"></li>
        <li><button>Send to<svg class="more"><use href="#more"/></svg></button></li>
        <li class="sep"></li>
        <li><button>Cut</button></li>
        <li><button>Copy</button></li>
        <li class="sep"></li>
        <li><button>Create shortcut</button></li>
        <li><button>Delete</button></li>
        <li><button>Rename</button></li>
        <li class="sep"></li>
        <li><button>Properties</button></li>
    </menu>

    <div class="watermark">
        <span>ANY</span>
        <svg viewBox="0 0 56 64"><path d="M12 7L5 11v42l7 4M14 5v54M14 5l36 23-7 6-22-14v25M50 32L17 59" fill="none" stroke-linejoin="round"/></svg>
        <span>RUN</span>
    </div>

    <footer class="taskbar">
        <button class="start" aria-label="Start"><svg class="i16"><use href="#win"/></svg></button>
        <label class="search">
            <svg class="i16"><use href="#search"/></svg>
            <input type="text" placeholder="Type here to search" aria-label="Search">
            <svg class="puzzle"><use href="#puzzle"/></svg>
        </label>
        <button class="app" aria-label="Task View"><svg class="i18"><use href="#taskview"/></svg></button>
        <button class="app" aria-label="Edge"><svg class="i24"><use href="#edge"/></svg></button>
        <button class="app running" aria-label="File Explorer"><svg class="i24"><use href="#explorer"/></svg></button>
        <button class="app" aria-label="Firefox"><svg class="i24"><use href="#firefox"/></svg></button>
        <div class="tray">
            <button aria-label="Show hidden icons"><svg class="i16"><use href="#tchev"/></svg></button>
            <button aria-label="Meet Now"><svg class="i16"><use href="#meet"/></svg></button>
            <button aria-label="Volume"><svg class="i16"><use href="#volume"/></svg></button>
            <button aria-label="Network"><svg class="i16"><use href="#lan"/></svg></button>
            <button class="time">10:29 PM<br>5/23/2026</button>
            <button class="notes" aria-label="Notifications"><svg class="i16"><use href="#note"/></svg></button>
            <button class="peek" aria-label="Show desktop"></button>
        </div>
    </footer>
</div>

</body>
</html>
```
FILE: styles.css
```css
* {
    box-sizing: border-box;
}
body {
    margin: 0;
    font-family: "Noto Sans", "Open Sans", sans-serif;
    font-size: 11px;
    line-height: 15px;
    color: #000;
}
ul, menu {
    margin: 0;
    padding: 0;
    list-style: none;
}
button {
    padding: 0;
    border: none;
    background: none;
    font: inherit;
    color: inherit;
}
svg {
    flex: none;
}
.sprite {
    position: absolute;
    width: 0;
    height: 0;
}
.i8 { width: 8px; height: 8px; }
.i14 { width: 14px; height: 14px; }
.i16 { width: 16px; height: 16px; }
.i18 { width: 18px; height: 18px; }
.i24 { width: 24px; height: 24px; }
.word-letter {
    font: italic bold 18px "Liberation Serif", serif;
    fill: #1f56b0;
    stroke: #1f56b0;
    text-anchor: middle;
}

.desktop {
    position: relative;
    height: 100vh;
    overflow: hidden;
    background: radial-gradient(circle at 11% 78%, #00b4ff 0%, #00b0ff 22%, #009cf8 38%, #0084ea 51%, #066ad8 61%, #084ec6 71%, #0a3ab6 83%, #0a3cba 100%);
}
.rays {
    position: absolute;
    width: 100%;
    height: 100%;
}

/* Desktop icons */
.icons {
    position: relative;
    display: grid;
    grid-template-rows: repeat(auto-fill, 99px);
    grid-auto-flow: column;
    grid-auto-columns: 75px;
    justify-content: start;
    align-items: start;
    height: calc(100vh - 40px);
    padding-top: 6px;
}
.icon {
    display: flex;
    flex-direction: column;
    align-items: center;
    gap: 3px;
    padding-right: 1px;
    border: 1px solid transparent;
    color: #fff;
    text-align: center;
    text-shadow: 0 1px 2px rgba(0, 0, 0, 0.5);
}
.icon svg {
    width: 48px;
    height: 48px;
}
.icon.selected {
    background: rgba(130, 195, 255, 0.4);
    border-color: rgba(160, 215, 255, 0.6);
}

/* Explorer */
.window {
    position: absolute;
    left: 782px;
    top: 202px;
    bottom: 0;
    width: 900px;
    display: flex;
    flex-direction: column;
    background: #fff;
    box-shadow: 0 0 0 1px rgba(20, 90, 170, 0.6);
}
.titlebar {
    display: flex;
    align-items: center;
    gap: 6px;
    height: 30px;
    padding: 0 0 1px 8px;
    color: #8f8f8f;
}
.bar {
    width: 1px;
    height: 12px;
    margin-left: 1px;
    background: #8c8c8c;
}
.titlebar .bar + svg {
    margin-left: 3px;
}
.tabs {
    display: flex;
    height: 24px;
    border-bottom: 1px solid #dadbdc;
}
.tabs button {
    height: 23px;
    padding: 0 15px;
    color: #333;
}
.tabs .file {
    width: 56px;
    background: #0063b1;
    color: #fff;
}
.tabs .active {
    height: 24px;
    padding: 0 14px 1px;
    background: #f5f6f7;
    border-right: 1px solid #dadbdc;
}
.ribbon {
    display: flex;
    height: 92px;
    padding-top: 4px;
    background: #f5f6f7;
    border-bottom: 1px solid #dadbdc;
    color: #333;
}
.group {
    height: 83px;
    border-right: 1px solid #dcdfe3;
}
.clipboard { width: 263px; }
.organize { width: 191px; }
.new { width: 142px; }
.tools {
    display: flex;
    height: 70px;
    padding-left: 4px;
}
.big {
    width: 42px;
    padding-top: 3px;
    line-height: 13px;
    white-space: nowrap;
    align-self: flex-start;
}
.big svg {
    display: block;
    width: 32px;
    height: 32px;
    margin: 0 auto 4px;
}
.wide {
    width: 69px;
}
.ribbon button:disabled {
    color: #757575;
}
.ribbon button:disabled .tri {
    color: #b5b5b5;
}
.stack {
    margin-left: 4px;
}
.stack button {
    display: flex;
    align-items: center;
    gap: 3px;
    height: 22px;
    padding-bottom: 1px;
    white-space: nowrap;
}
.tri {
    display: inline-block;
    border: 3px solid transparent;
    border-top-color: currentColor;
    border-bottom: none;
    vertical-align: middle;
}
.divider {
    width: 1px;
    height: 56px;
    margin: 4px 3px 0;
    background: #dcdfe3;
}
.caption {
    text-align: center;
    color: #444;
}
.navbar {
    display: flex;
    align-items: center;
    height: 35px;
    padding-left: 4px;
}
.navbar button {
    display: flex;
    justify-content: center;
    width: 30px;
}
.navbar .slim {
    width: 20px;
}
.address {
    display: flex;
    flex: 1;
    align-items: center;
    gap: 6px;
    height: 22px;
    margin-left: 2px;
    padding: 0 0 1px 3px;
    border: 1px solid #d9d9d9;
}
.panes {
    display: flex;
    flex: 1;
    min-height: 0;
}
.tree {
    width: 139px;
    overflow: hidden;
}
.tree li {
    display: flex;
    align-items: center;
    gap: 5px;
    height: 24px;
    padding: 0 0 1px 32px;
    white-space: nowrap;
}
.tree .sub {
    padding-left: 40px;
}
.tree .current {
    background: #d9d9d9;
}
.scrollbar {
    display: flex;
    flex-direction: column;
    align-items: center;
    width: 16px;
    padding: 5px 0 2px;
    background: #f0f0f0;
}
.thumb {
    width: 100%;
    height: 116px;
    margin: auto 0 18px;
    background: #cdcdcd;
}
.files {
    flex: 1;
    align-self: flex-start;
    margin-left: 14px;
    border-collapse: collapse;
    table-layout: fixed;
    width: 700px;
}
.files th {
    position: relative;
    height: 25px;
    padding: 0 0 0 7px;
    border-right: 1px solid #e3e5e8;
    font-weight: normal;
    text-align: left;
    color: #43557a;
}
.files .name {
    width: 262px;
    padding-left: 8px;
}
.files .date { width: 144px; }
.sort {
    position: absolute;
    left: calc(50% - 4px);
    top: -2px;
}
.files tbody::before {
    content: "";
    display: table-row;
    height: 6px;
}
.files td {
    height: 21px;
    padding: 0 0 0 8px;
    white-space: nowrap;
}
.files td svg {
    margin-right: 5px;
    vertical-align: middle;
}
.files td + td {
    padding-left: 7px;
    color: #6d6d6d;
}

/* Context menu */
.context {
    position: absolute;
    left: 419px;
    top: 265px;
    width: 301px;
    padding: 4px 0;
    background: #eee;
    border: 1px solid #a0a0a0;
}
.context button {
    display: flex;
    align-items: center;
    width: 100%;
    height: 22px;
    padding: 0 0 1px 34px;
}
.context .default {
    font-weight: bold;
}
.context .i16 {
    margin: 0 8px 0 -24px;
}
.context .more {
    width: 8px;
    height: 14px;
    margin: 0 10px 0 auto;
}
.context .sep {
    height: 1px;
    margin: 3px 10px;
    background: #919191;
}

.watermark {
    position: absolute;
    right: 48px;
    bottom: 46px;
    display: flex;
    align-items: center;
    gap: 6px;
    font: 34px "Roboto", sans-serif;
    color: #fff;
    text-shadow: 0 0 3px rgba(0, 0, 0, 0.35);
}
.watermark svg {
    width: 56px;
    height: 64px;
    stroke: #fff;
    stroke-width: 4px;
    filter: drop-shadow(0 0 2px rgba(0, 0, 0, 0.35));
}

/* Taskbar */
.taskbar {
    position: absolute;
    left: 0;
    right: 0;
    bottom: 0;
    display: flex;
    height: 40px;
    background: rgba(0, 0, 0, 0.85);
    color: #fff;
}
.taskbar button {
    display: flex;
    align-items: center;
    justify-content: center;
}
.start, .app {
    width: 48px;
    margin-right: 1px;
}
.taskbar .start {
    margin: 0;
}
.search {
    display: flex;
    align-items: center;
    gap: 12px;
    width: 288px;
    padding: 0 4px 0 11px;
    background: #f0f0f0;
    border: 1px solid #c4c4c4;
}
.search input {
    flex: 1;
    min-width: 0;
    padding: 0;
    border: none;
    background: none;
    font: 14px "Open Sans", "Noto Sans", sans-serif;
}
.search input::placeholder {
    color: #333;
    opacity: 1;
}
.puzzle {
    width: 64px;
    height: 36px;
}
.search + .app {
    margin-right: 3px;
}
.running {
    background: linear-gradient(#76b9ed, #76b9ed) center bottom / 40px 2px no-repeat;
}
.tray {
    display: flex;
    margin-left: auto;
}
.tray button {
    width: 24px;
}
.tray .time {
    width: 64px;
    padding-bottom: 1px;
    line-height: 17px;
}
.tray .notes {
    width: 40px;
    margin-right: 8px;
}
.tray .peek {
    width: 5px;
    border-left: 1px solid #6e6e6e;
}
```
